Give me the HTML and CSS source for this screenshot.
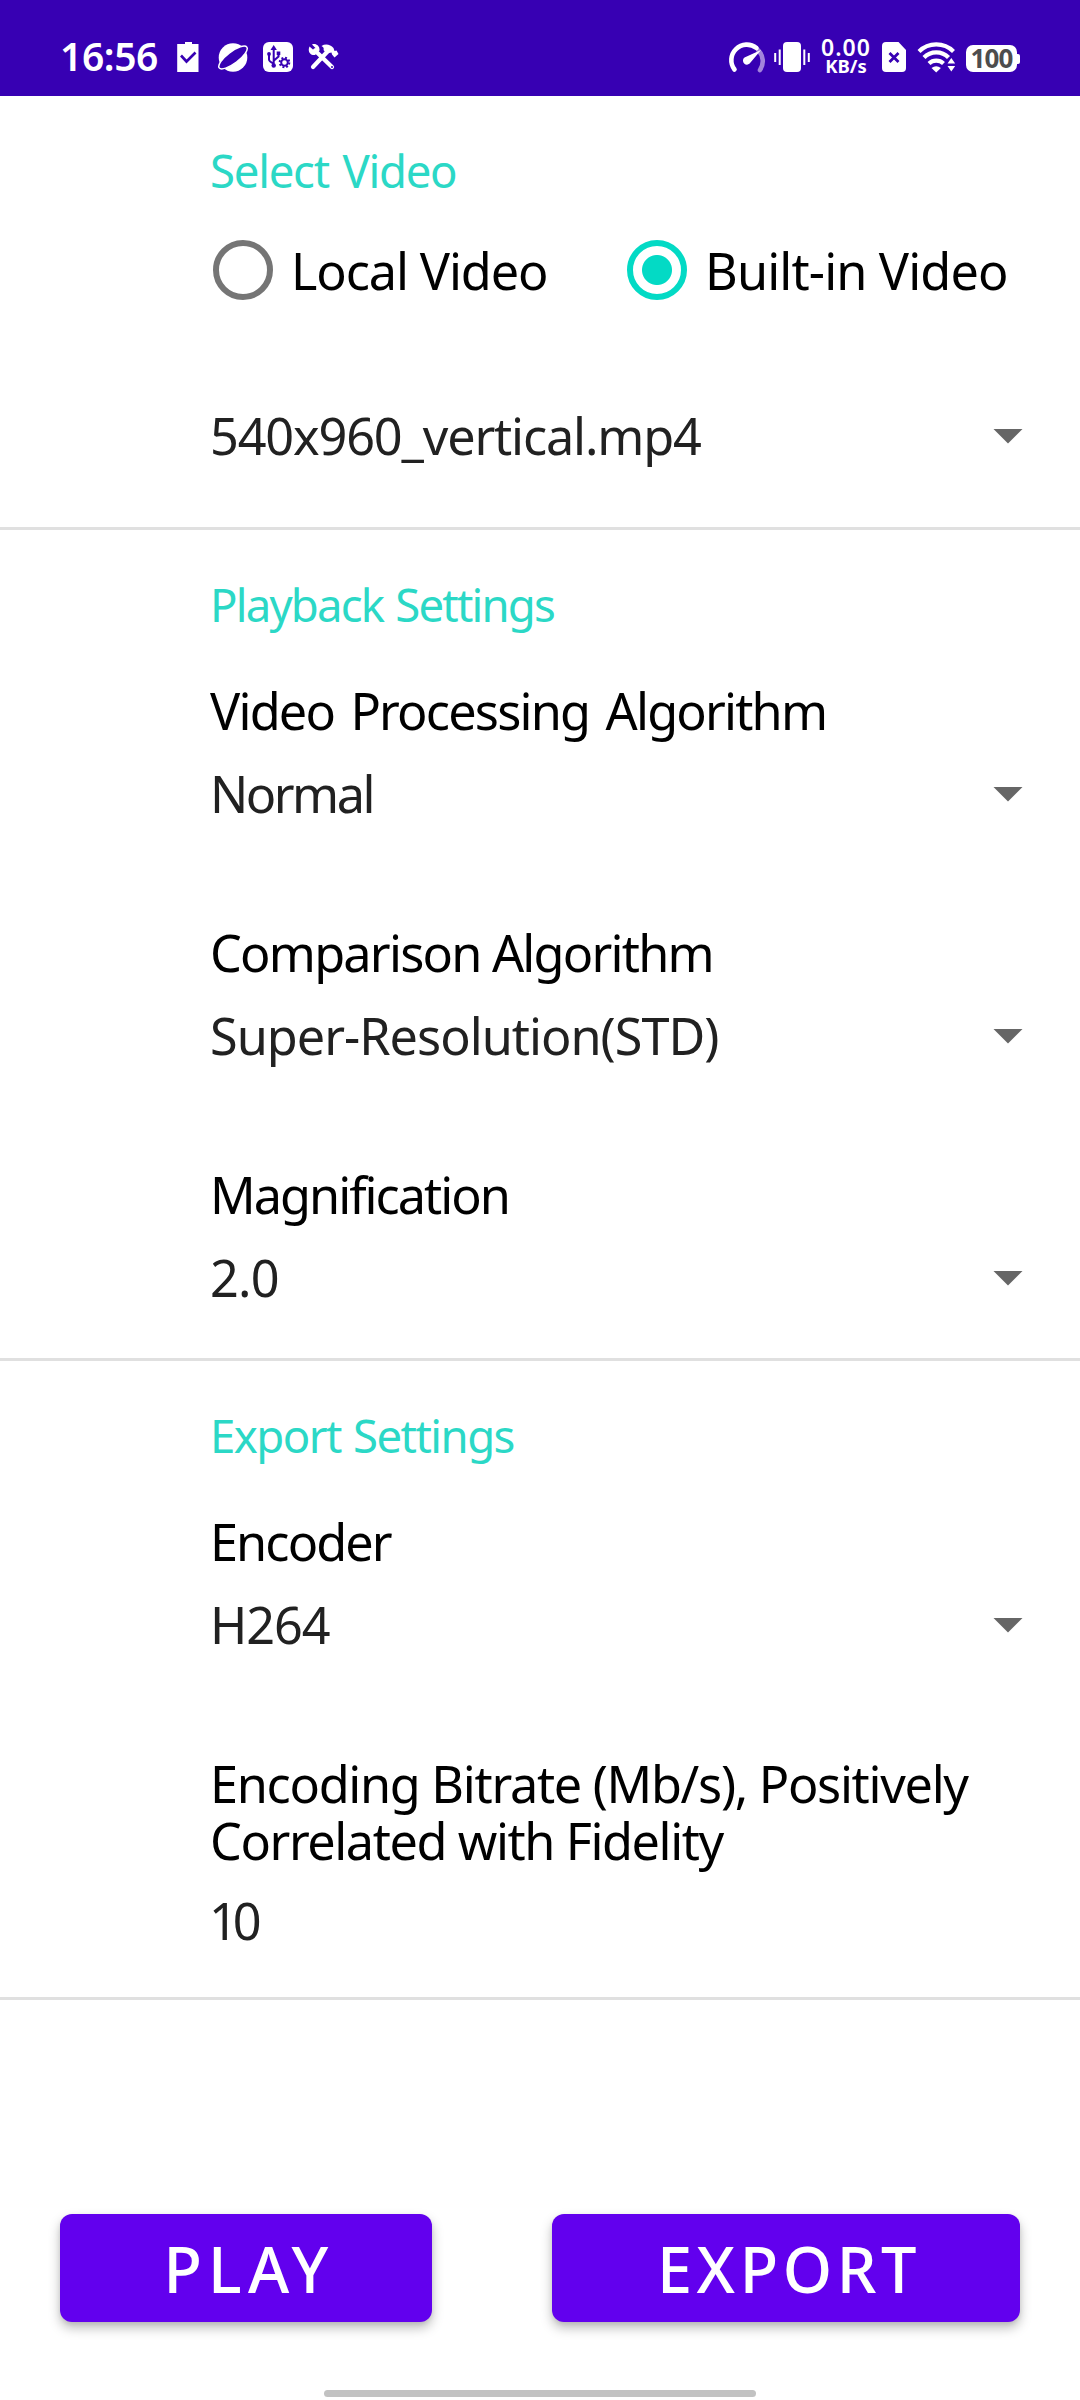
FILE: index.html
```
<!DOCTYPE html>
<html lang="en">
<head>
<meta charset="utf-8">
<title>Video Settings</title>
<link rel="stylesheet" href="styles.css">
</head>
<body>
<header class="status">
  <span class="clock">16:56</span>
  <svg class="ic-clip" width="22" height="34" viewBox="176.5 39 22 34"><path fill="#fff" d="M178 44h6.500v-2h7v2h6.500v28h-21.300v-28z"/><path d="M180.500 55.500l5.500 6 9-9" fill="none" stroke="#3700b3" stroke-width="2.600"/></svg>
  <svg class="ic-planet" width="32" height="34" viewBox="217 39 32 34"><circle cx="233" cy="57.500" r="14.300" fill="#fff"/><ellipse cx="233" cy="57.500" rx="17.300" ry="5.800" transform="rotate(-37 233 57.500)" fill="#3700b3" stroke="#fff" stroke-width="1.500"/></svg>
  <svg class="ic-usb" width="30" height="34" viewBox="263 39 30 34"><rect x="263" y="42" width="30" height="30" rx="6" fill="#fff"/><g fill="none" stroke="#3700b3" stroke-width="2"><path d="M273.700 49v17M269 54v5.500q0 2 4.700 4M278.500 53v3.500l-4.500 4"/></g><g fill="#3700b3"><path d="M273.700 45l3.200 5h-6.400z"/><circle cx="273.700" cy="65.500" r="2.200"/><circle cx="269" cy="54" r="1.900"/><path d="M276.700 51.500h3.600v3.600h-3.600z"/></g><circle cx="284.500" cy="62.500" r="3.300" fill="none" stroke="#3700b3" stroke-width="2"/><circle cx="284.500" cy="62.500" r="4.800" fill="none" stroke="#3700b3" stroke-width="2" stroke-dasharray="1.900 1.870"/></svg>
  <svg class="ic-tools" width="31" height="34" viewBox="307.500 39 31 34"><g fill="none" stroke="#fff" stroke-width="4.200"><path d="M314.500 50.500l17 16.500" stroke-linecap="round"/><path d="M327 51.500l-14.500 15.500" stroke-linecap="round"/></g><path d="M309 46.500l4 3.500 2-2-3.500-3.500c4-1.500 8 1.500 7.500 6l-4.500 4.500c-4.500.8-7.800-3.500-5.500-8.500zM321 46c4-2.500 9-1.500 12 2l1 3 2-.5 2 3.500-4 3.500-2.500-3-.5-2-5 1-3-3.500q1-2.500-2-4z" fill="#fff"/><circle cx="331.500" cy="67" r="1" fill="#3700b3"/></svg>
  <svg class="ic-gauge" width="38" height="34" viewBox="728 39 38 34"><g fill="none" stroke-width="4.600" stroke-linecap="round"><path d="M758.500 50.500a15.500 15.500 0 0 1 1.500 19.500" stroke="#a384dc"/><path d="M734.500 69.500a15.500 15.500 0 0 1 22-21.500" stroke="#fff"/></g><path d="M761 50l-10.500 12.500a4 4 0 1 1-6-5z" fill="#fff"/></svg>
  <svg class="ic-vibrate" width="36" height="34" viewBox="774 39 36 34"><rect x="783" y="42" width="18" height="30" rx="4" fill="#fff"/><path d="M775.200 53v9M779.700 49.500v15.500M804.300 49.500v15.500M808.800 53v9" stroke="#fff" stroke-width="2"/></svg>
  <span class="speed"><span class="rate">0.00</span><span class="unit">KB/s</span></span>
  <svg class="ic-sim" width="24" height="34" viewBox="882 39 24 34"><path fill="#fff" d="M886 42h12.500l7.500 8v18a4 4 0 0 1-4 4h-16a4 4 0 0 1-4-4v-22a4 4 0 0 1 4-4z"/><path d="M889.500 53l9 9M898.500 53l-9 9" stroke="#3700b3" stroke-width="2.800"/></svg>
  <svg class="ic-wifi" width="38" height="34" viewBox="917 39 38 34"><g fill="none" stroke="#fff" stroke-width="4.200"><path d="M919 51.500a24.500 24.500 0 0 1 34.500 0"/><path d="M924 57.500a17 17 0 0 1 24.500 0"/><path d="M929 63.500a10.500 10.500 0 0 1 14.500 0"/></g><path d="M931.500 68q4.700-3.500 9.400 0l-4.700 4.500z" fill="#fff"/><path d="M947.500 63.500l3.800-5.500 3.800 5.500zM947.500 66l3.800 5.500 3.800-5.500z" fill="#fff"/></svg>
  <span class="battery"><span class="cell">100</span><span class="nub"></span></span>
</header>
<main>
  <section class="section select">
    <h2 class="title t-select">Select Video</h2>
    <div class="radios">
      <label class="radio local"><span class="ring"></span><span class="text t-local">Local Video</span></label>
      <label class="radio builtin"><span class="ring on"></span><span class="text t-builtin">Built-in Video</span></label>
    </div>
    <div class="value"><span class="text t-file">540x960_vertical.mp4</span><span class="arrow"></span></div>
  </section>
  <section class="section playback">
    <h2 class="title t-playback">Playback Settings</h2>
    <div class="field">
      <div class="label t-processing">Video Processing Algorithm</div>
      <div class="value"><span class="text t-normal">Normal</span><span class="arrow"></span></div>
    </div>
    <div class="field">
      <div class="label t-comparison">Comparison Algorithm</div>
      <div class="value"><span class="text t-super">Super-Resolution(STD)</span><span class="arrow"></span></div>
    </div>
    <div class="field">
      <div class="label t-magnification">Magnification</div>
      <div class="value"><span class="text t-two">2.0</span><span class="arrow"></span></div>
    </div>
  </section>
  <section class="section export">
    <h2 class="title t-export">Export Settings</h2>
    <div class="field">
      <div class="label t-encoder">Encoder</div>
      <div class="value"><span class="text t-codec">H264</span><span class="arrow"></span></div>
    </div>
    <div class="field bitrate">
      <div class="label"><span class="t-bitrate">Encoding Bitrate (Mb/s), Positively</span><br><span class="t-fidelity">Correlated with Fidelity</span></div>
      <div class="value"><span class="text t-ten">10</span></div>
    </div>
  </section>
</main>
<div class="actions">
  <button class="btn play">PLAY</button>
  <button class="btn save">EXPORT</button>
</div>
<div class="homebar"></div>
</body>
</html>
```
FILE: styles.css
```
* { box-sizing: border-box; }
body {
  margin: 0;
  width: 1080px;
  height: 2400px;
  background: #fff;
  color: #000;
  font-family: "Noto Sans", sans-serif;
  font-size: 50.4px;
  line-height: 60px;
  overflow: hidden;
  display: flex;
  flex-direction: column;
}

/* Status bar */
.status {
  height: 96px;
  padding: 16px 60px 0;
  background: #3700b3;
  color: #fff;
  display: flex;
  align-items: center;
}
.status svg { flex: none; display: block; }
.clock { width: 116.5px; font-size: 39px; font-weight: 600; letter-spacing: -0.4px; line-height: 80px; }
.ic-planet { margin-left: 18.5px; }
.ic-usb { margin-left: 14px; }
.ic-tools { margin-left: 14.5px; }
.ic-gauge { margin-left: 389.5px; }
.ic-vibrate { margin-left: 8px; }
.speed { width: 72px; display: flex; flex-direction: column; align-items: center; font-weight: 600; }
.rate { font-size: 23px; line-height: 19px; letter-spacing: 1px; }
.unit { font-size: 18.5px; font-weight: 700; line-height: 18px; }
.ic-wifi { margin-left: 11px; }
.battery { margin-left: 11px; display: flex; align-items: center; margin-top: 5px; }
.cell {
  width: 51px;
  height: 27px;
  border-radius: 7px;
  background: #fff;
  color: #4d4d4d;
  font-size: 26px;
  font-weight: 700;
  line-height: 27px;
  letter-spacing: -0.8px;
  text-align: center;
}
.nub { width: 3px; height: 10px; background: #fff; border-radius: 0 2px 2px 0; }

/* Sections */
.section { padding: 44px 57px 0 210px; border-bottom: 3px solid #e0e0e0; }
.select { padding-bottom: 62px; }
.playback { padding-bottom: 51px; }
.export { padding-bottom: 47px; }
.title {
  margin: 0;
  color: #2bd8c6;
  font-size: 45.5px;
  font-weight: 400;
  line-height: 61px;
  height: 60px;
  white-space: nowrap;
}
.title + .field { margin-top: 46px; }
.field + .field { margin-top: 99px; }
.field + .bitrate { margin-top: 101px; }
.label { height: 60px; line-height: 62px; white-space: nowrap; }
.label + .value { margin-top: 23px; }
.bitrate .label { height: 114px; line-height: 57px; }
.bitrate .value { margin-top: 21px; }
.value { height: 60px; display: flex; justify-content: space-between; align-items: center; color: #212121; }
.text { height: 60px; line-height: 62px; }
.arrow { width: 30px; height: 15px; margin-top: 2px; background: #666; clip-path: polygon(0 0, 100% 0, 50% 100%); }

.radios { display: flex; margin: 40px 0 105px 3px; }
.radio { display: flex; gap: 18px; white-space: nowrap; }
.local { width: 414px; }
.ring { width: 60px; height: 60px; border: 6px solid #757575; border-radius: 50%; flex: none; }
.ring.on { border-color: #03dac5; background: radial-gradient(circle, #03dac5 14.5px, transparent 15.5px); }

/* Tracking per string */
.t-select { letter-spacing: -1.25px; word-spacing: 3px; }
.t-playback { letter-spacing: -1.8px; word-spacing: 2px; }
.t-export { letter-spacing: -1.55px; word-spacing: 2px; }
.t-local { letter-spacing: -1.11px; }
.t-builtin { letter-spacing: -0.86px; }
.t-file { letter-spacing: -1.16px; }
.t-processing { letter-spacing: -1.8px; word-spacing: 5px; }
.t-normal { letter-spacing: -2.5px; }
.t-comparison { letter-spacing: -1.77px; }
.t-super { letter-spacing: -1px; }
.t-magnification { letter-spacing: -1.98px; }
.t-two { letter-spacing: -0.8px; }
.t-encoder { letter-spacing: -1.9px; }
.t-codec { letter-spacing: -1.1px; }
.t-bitrate { letter-spacing: -1.3px; }
.t-fidelity { letter-spacing: -1.42px; }
.t-ten { letter-spacing: -5px; margin-left: -1px; }

/* Bottom actions */
.actions { display: flex; gap: 120px; margin: 214px 60px 0; }
.btn {
  height: 108px;
  padding: 2px 0 0 6px;
  border: 0;
  border-radius: 12px;
  background: #6200ee;
  color: #fff;
  font-family: inherit;
  font-size: 63px;
  font-weight: 500;
  line-height: 106px;
  box-shadow: 0 6px 12px rgba(0, 0, 0, 0.26), 0 2px 4px rgba(0, 0, 0, 0.08);
}
.play { width: 372px; letter-spacing: 6.2px; }
.save { width: 468px; letter-spacing: 4.6px; }
.homebar { width: 432px; height: 7px; margin: 68px auto 0; border-radius: 4px; background: #c2c2c2; }
```
